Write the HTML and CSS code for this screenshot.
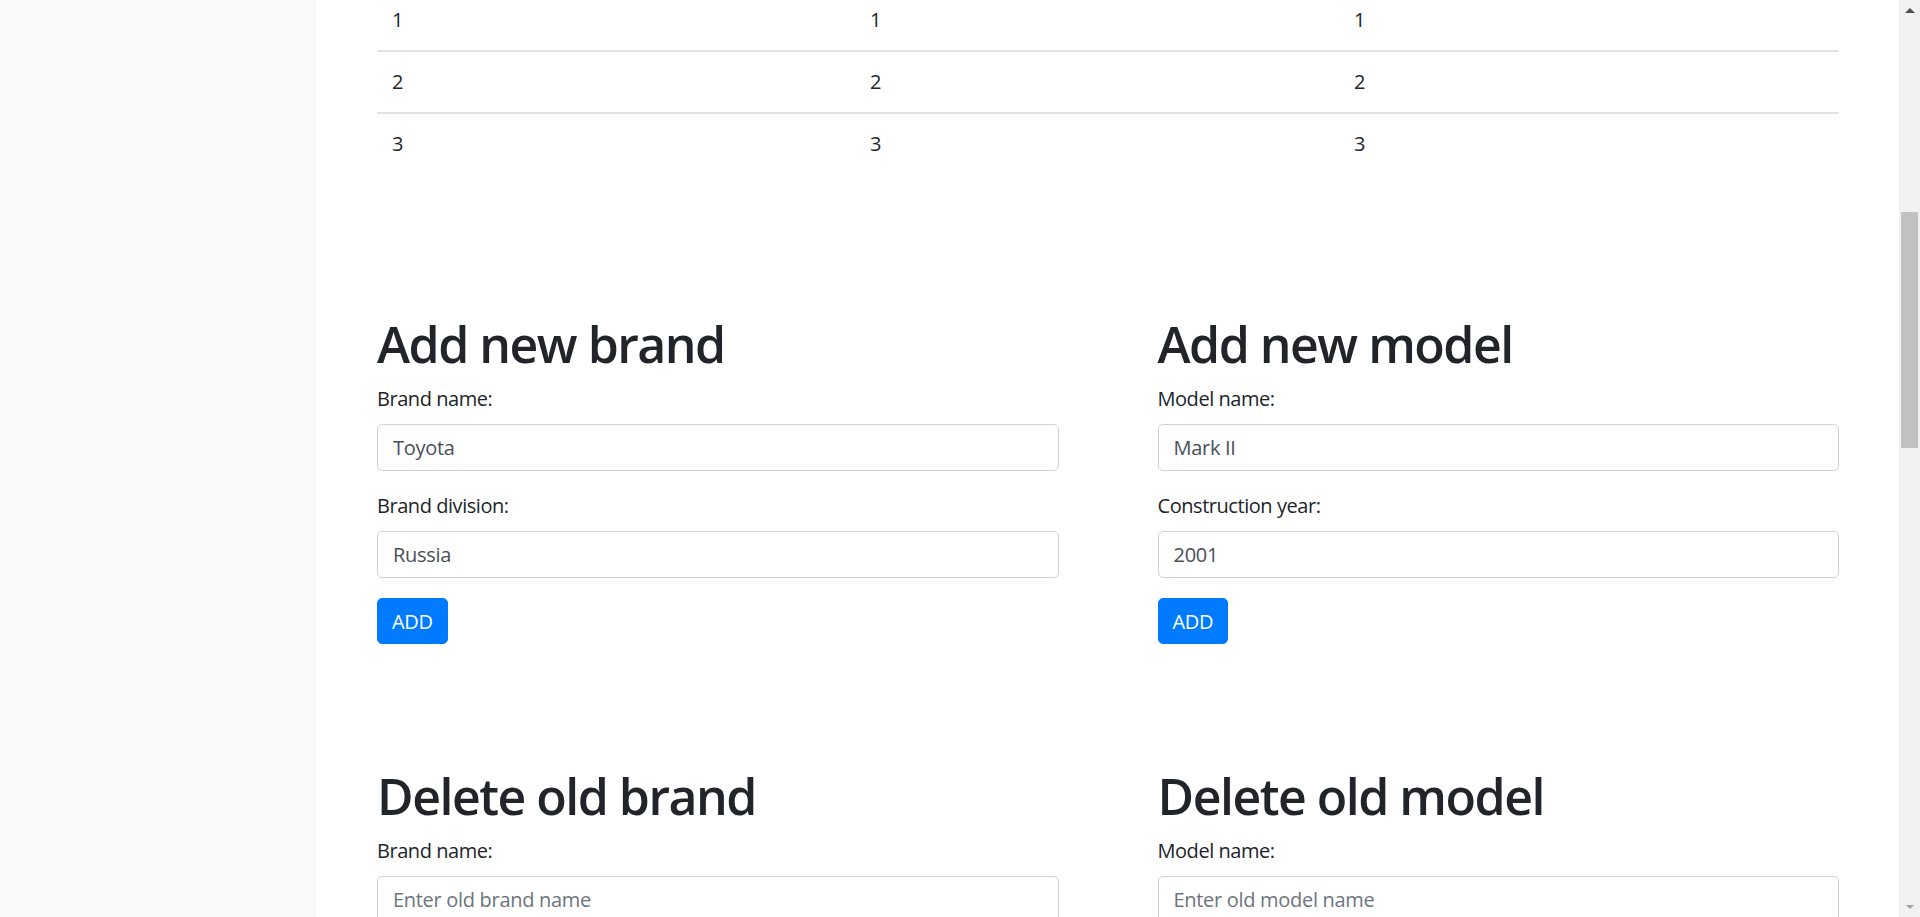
FILE: index.html
```html
<!DOCTYPE html>
<html lang="en">
<head>
<meta charset="utf-8">
<title>Cars</title>
<link rel="stylesheet" href="styles.css">
</head>
<body>
<div class="layout">
  <aside class="sidebar"></aside>
  <main class="main">
    <table class="table">
      <colgroup>
        <col class="col-a">
        <col class="col-b">
        <col class="col-c">
      </colgroup>
      <tbody>
        <tr><td>1</td><td>1</td><td>1</td></tr>
        <tr><td>2</td><td>2</td><td>2</td></tr>
        <tr><td>3</td><td>3</td><td>3</td></tr>
      </tbody>
    </table>

    <div class="forms">
      <section class="form-block">
        <h1 class="title">Add new brand</h1>
        <div class="form-group">
          <label class="label">Brand name:</label>
          <input class="form-control" type="text" value="Toyota">
        </div>
        <div class="form-group">
          <label class="label">Brand division:</label>
          <input class="form-control" type="text" value="Russia">
        </div>
        <button class="btn" type="button">ADD</button>
      </section>

      <section class="form-block">
        <h1 class="title">Add new model</h1>
        <div class="form-group">
          <label class="label">Model name:</label>
          <input class="form-control" type="text" value="Mark II">
        </div>
        <div class="form-group">
          <label class="label">Construction year:</label>
          <input class="form-control" type="text" value="2001">
        </div>
        <button class="btn" type="button">ADD</button>
      </section>

      <section class="form-block">
        <h1 class="title">Delete old brand</h1>
        <div class="form-group">
          <label class="label">Brand name:</label>
          <input class="form-control" type="text" placeholder="Enter old brand name">
        </div>
        <button class="btn" type="button">DELETE</button>
      </section>

      <section class="form-block">
        <h1 class="title">Delete old model</h1>
        <div class="form-group">
          <label class="label">Model name:</label>
          <input class="form-control" type="text" placeholder="Enter old model name">
        </div>
        <button class="btn" type="button">DELETE</button>
      </section>
    </div>
  </main>
  <div class="scrollbar">
    <div class="sb-btn"><span class="arrow-up"></span></div>
    <div class="sb-track"><div class="sb-thumb"></div></div>
    <div class="sb-btn"><span class="arrow-down"></span></div>
  </div>
</div>
</body>
</html>
```

FILE: styles.css
```css
html, body {
  margin: 0;
  padding: 0;
  height: 917px;
  overflow: hidden;
  background: #fff;
}

body {
  font-family: "Open Sans", "Noto Sans", sans-serif;
  font-size: 20px;
  line-height: 30px;
  color: #212529;
}

.layout {
  display: flex;
  height: 917px;
}

.sidebar {
  width: 316px;
  flex: 0 0 316px;
  background: #f8f9fa;
}

.main {
  flex: 1 1 auto;
  padding: 0 60px 0 61px;
  margin-top: -12px;
  min-width: 0;
}

.table {
  width: 100%;
  border-collapse: collapse;
  table-layout: fixed;
}

.col-a { width: 478px; }
.col-b { width: 484px; }

.table td {
  padding: 15px;
  line-height: 30px;
  border-top: 2px solid #dee2e6;
  vertical-align: top;
}

.forms {
  margin-top: 140px;
  display: grid;
  grid-template-columns: 1fr 1fr;
  column-gap: 99px;
  row-gap: 122px;
}

.title {
  margin: 0 0 10px;
  font-size: 50px;
  line-height: 60px;
  font-weight: 600;
  letter-spacing: -1.5px;
}

.form-group {
  margin-bottom: 20px;
}

.label {
  display: block;
  margin-bottom: 10px;
  line-height: 30px;
  letter-spacing: -0.45px;
}

.form-control {
  display: block;
  box-sizing: border-box;
  width: 100%;
  height: 47px;
  padding: 7.5px 15px;
  font-family: inherit;
  font-size: 20px;
  line-height: 30px;
  letter-spacing: -0.3px;
  color: #495057;
  background: #fff;
  border: 1px solid #ced4da;
  border-radius: 5px;
  outline: none;
}

.form-control::placeholder {
  color: #6c757d;
  opacity: 1;
}

.btn {
  display: inline-block;
  height: 46px;
  padding: 8px 14px 6px;
  font-family: inherit;
  font-size: 20px;
  line-height: 30px;
  letter-spacing: -0.3px;
  color: #fff;
  background: #007bff;
  border: 1px solid #007bff;
  border-radius: 5px;
}

.scrollbar {
  width: 21px;
  flex: 0 0 21px;
  background: #f1f1f1;
  display: flex;
  flex-direction: column;
}

.sb-btn {
  height: 21px;
  flex: 0 0 21px;
  display: flex;
  align-items: center;
  justify-content: center;
}

.arrow-up {
  width: 0;
  height: 0;
  border-left: 5px solid transparent;
  border-right: 5px solid transparent;
  border-bottom: 5px solid #505050;
}

.arrow-down {
  width: 0;
  height: 0;
  border-left: 4px solid transparent;
  border-right: 4px solid transparent;
  border-top: 4px solid #a3a3a3;
}

.sb-track {
  flex: 1 1 auto;
  padding: 191px 2px 0;
}

.sb-thumb {
  height: 236px;
  background: #c1c1c1;
}
```
